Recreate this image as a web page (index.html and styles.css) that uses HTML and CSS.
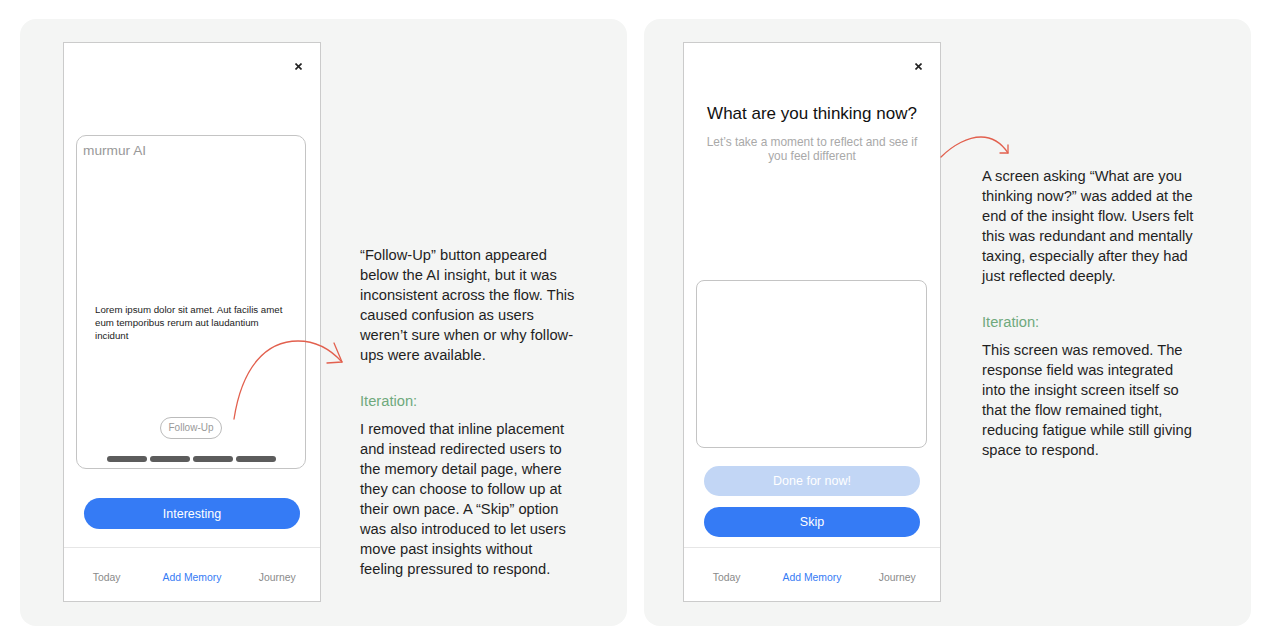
FILE: index.html
```html
<!DOCTYPE html>
<html lang="en">

<head>
    <meta charset="UTF-8">
    <meta name="viewport" content="width=device-width, initial-scale=1.0">
    <title>Iteration notes</title>
    <link rel="stylesheet" href="styles.css">
</head>

<body>
    <div class="board">

        <!-- 左侧：Follow-Up 按钮 -->
        <section class="panel">
            <div class="phone">
                <div class="close-row">
                    <svg class="close" width="7" height="7" viewBox="0 0 7 7"><path d="M0.5 0.5 L6.5 6.5 M6.5 0.5 L0.5 6.5" /></svg>
                </div>
                <div class="insight-card">
                    <div class="card-label">murmur AI</div>
                    <p class="card-text">Lorem ipsum dolor sit amet. Aut facilis amet eum temporibus rerum aut laudantium incidunt</p>
                    <span class="pill">Follow-Up</span>
                    <div class="steps">
                        <span></span><span></span><span></span><span></span>
                    </div>
                </div>
                <button class="btn btn-primary btn-interesting">Interesting</button>
                <nav class="tabbar">
                    <span>Today</span>
                    <span class="active">Add Memory</span>
                    <span>Journey</span>
                </nav>
            </div>

            <div class="notes notes-left">
                <p>“Follow-Up” button appeared below the AI insight, but it was inconsistent across the flow. This caused confusion as users weren’t sure when or why follow-ups were available.</p>
                <h3 class="iteration">Iteration:</h3>
                <p>I removed that inline placement and instead redirected users to the memory detail page, where they can choose to follow up at their own pace. A “Skip” option was also introduced to let users move past insights without feeling pressured to respond.</p>
            </div>

            <svg class="arrow" width="607" height="607" viewBox="0 0 607 607">
                <path d="M214 400 C 222 348, 246 322, 278 322 C 297 322, 312 332, 322 343" />
                <path d="M314 324 L322 343 L307 344" />
            </svg>
        </section>

        <!-- 右侧：What are you thinking now? -->
        <section class="panel panel-right">
            <div class="phone">
                <div class="close-row">
                    <svg class="close" width="7" height="7" viewBox="0 0 7 7"><path d="M0.5 0.5 L6.5 6.5 M6.5 0.5 L0.5 6.5" /></svg>
                </div>
                <h2 class="question">What are you thinking now?</h2>
                <p class="question-sub">Let’s take a moment to reflect and see if you feel different</p>
                <div class="answer-box"></div>
                <button class="btn btn-soft">Done for now!</button>
                <button class="btn btn-primary btn-skip">Skip</button>
                <nav class="tabbar">
                    <span>Today</span>
                    <span class="active">Add Memory</span>
                    <span>Journey</span>
                </nav>
            </div>

            <div class="notes notes-right">
                <p>A screen asking “What are you thinking now?” was added at the end of the insight flow. Users felt this was redundant and mentally taxing, especially after they had just reflected deeply.</p>
                <h3 class="iteration">Iteration:</h3>
                <p>This screen was removed. The response field was integrated into the insight screen itself so that the flow remained tight, reducing fatigue while still giving space to respond.</p>
            </div>

            <svg class="arrow" width="607" height="607" viewBox="0 0 607 607">
                <path d="M297 138 C 309 126, 324 118, 337 118 C 349 118, 358 125, 364 134" />
                <path d="M356 134 L364 134 L364 126" />
            </svg>
        </section>

    </div>
</body>

</html>
```

FILE: styles.css
```css
body {
    font-family: 'Liberation Sans', Arial, sans-serif;
    background-color: #fff;
    color: #1c1c1c;
    margin: 0;
}

.board {
    display: flex;
    gap: 17px;
    padding: 19px 20px;
}

.panel {
    position: relative;
    display: flex;
    align-items: flex-start;
    width: 607px;
    height: 607px;
    box-sizing: border-box;
    padding: 23px 0 0 43px;
    background-color: #f4f5f4;
    border-radius: 16px;
}

.panel-right {
    padding-left: 39px;
}

/* 手机外框 */
.phone {
    display: flex;
    flex-direction: column;
    width: 258px;
    height: 560px;
    box-sizing: border-box;
    background-color: #fff;
    border: 1px solid #cbcbcb;
}

.close-row {
    display: flex;
    justify-content: flex-end;
    height: 46px;
    padding: 20px 18px 0 0;
    box-sizing: border-box;
}

.close path {
    stroke: #222;
    stroke-width: 1.6;
    fill: none;
}

.insight-card {
    display: flex;
    flex-direction: column;
    align-items: center;
    height: 334px;
    margin: 46px 14px 0 12px;
    border: 1px solid #c4c4c4;
    border-radius: 10px;
    box-sizing: border-box;
}

.card-label {
    align-self: flex-start;
    padding: 7px 0 0 6px;
    font-size: 13.7px;
    line-height: 16px;
    color: #999;
}

.card-text {
    align-self: stretch;
    margin: 144px 18px 0 18px;
    font-size: 9.7px;
    line-height: 13px;
    color: #222;
}

.pill {
    margin-top: 75px;
    padding: 0 7px;
    height: 20px;
    line-height: 20px;
    font-size: 10px;
    color: #999;
    border: 1px solid #bbb;
    border-radius: 11px;
}

.steps {
    display: flex;
    gap: 3px;
    margin-top: 17px;
}

.steps span {
    width: 40px;
    height: 6px;
    border-radius: 3px;
    background-color: #5c5c5c;
}

.btn {
    display: block;
    width: 216px;
    height: 31px;
    margin: 0 auto;
    border: none;
    border-radius: 16px;
    color: #fff;
    font-family: inherit;
    font-size: 12.5px;
}

.btn-primary {
    background-color: #357bf5;
}

.btn-soft {
    height: 30px;
    margin-top: 18px;
    background-color: #c2d6f5;
}

.btn-interesting {
    margin-top: 29px;
}

.btn-skip {
    height: 30px;
    margin-top: 11px;
}

.tabbar {
    display: grid;
    grid-template-columns: repeat(3, 1fr);
    height: 54px;
    margin-top: auto;
    padding-top: 23px;
    box-sizing: border-box;
    border-top: 1px solid #e6e6e6;
    font-size: 10.4px;
    line-height: 14px;
    color: #8a8a8a;
    text-align: center;
}

.tabbar .active {
    color: #357bf5;
}

/* 右侧问题页 */
.question {
    margin: 14px 0 0;
    font-size: 17px;
    font-weight: normal;
    line-height: 22px;
    text-align: center;
    color: #111;
}

.question-sub {
    margin: 10px 12px 0;
    font-size: 11.9px;
    line-height: 14px;
    text-align: center;
    color: #a9a9a9;
}

.answer-box {
    height: 168px;
    box-sizing: border-box;
    margin: 117px 13px 0 12px;
    border: 1px solid #c4c4c4;
    border-radius: 8px;
}

/* 说明文字 */
.notes {
    width: 216px;
    font-size: 14.7px;
    line-height: 20px;
    color: #1f1f1f;
}

.notes p {
    margin: 0;
}

.notes-left {
    margin: 203px 0 0 39px;
}

.notes-right {
    margin: 124px 0 0 41px;
}

.iteration {
    margin: 26px 0 8px;
    font-size: 14.7px;
    font-weight: normal;
    line-height: 20px;
    color: #6fa97c;
}

.arrow {
    position: absolute;
    top: 0;
    left: 0;
    pointer-events: none;
}

.arrow path {
    fill: none;
    stroke: #e2604e;
    stroke-width: 1.3;
    stroke-linecap: round;
    stroke-linejoin: round;
}
```
